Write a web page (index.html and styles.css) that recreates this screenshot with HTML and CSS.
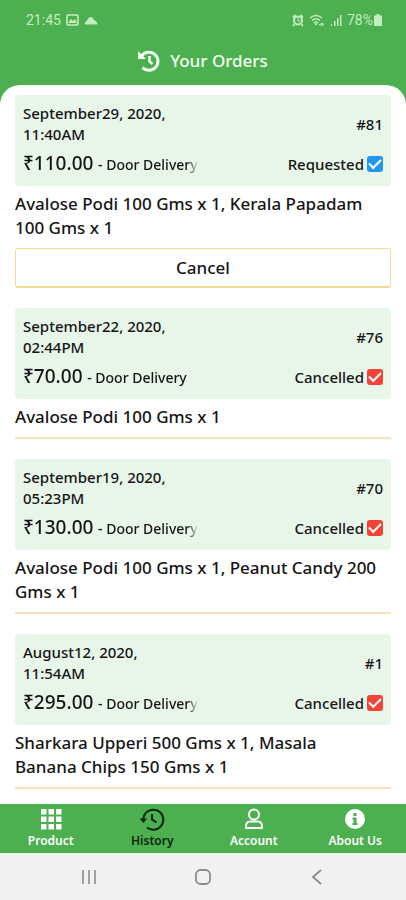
FILE: index.html
```html
<!DOCTYPE html>
<html lang="en">
<head>
  <meta charset="UTF-8">
  <meta name="viewport" content="width=device-width, initial-scale=1">
  <title>Your Orders</title>
  <link rel="stylesheet" href="styles.css">
</head>
<body>
  <div class="app">
    <header class="header">
      <div class="status-bar">
        <span class="clock">21:45</span>
        <svg class="status-icon image-icon" width="13" height="12" viewBox="0 0 13 12"><rect x="1" y="1" width="11" height="10" rx="1" fill="none" stroke="currentColor" stroke-width="1.6"/><path d="M2 9l3-4 2 2 2-2 2 4z" fill="currentColor"/></svg>
        <svg class="status-icon cloud-icon" width="14" height="9" viewBox="0 0 14 9"><path d="M1 8.500Q0 6 3 5Q4 1 7 1Q9 1 10 4Q13 5 13.500 8.500z" fill="currentColor"/></svg>
        <span class="spacer"></span>
        <svg class="status-icon" width="12" height="13" viewBox="0 0 12 13"><path d="M1 3.500L3.500 1M11 3.500L8.500 1M2.500 10.500L1 12M9.500 10.500L11 12" stroke="currentColor" stroke-width="1.800"/><circle cx="6" cy="6.500" r="4" fill="none" stroke="currentColor" stroke-width="2"/><path d="M6 4v3h2" fill="none" stroke="currentColor"/></svg>
        <svg class="status-icon wifi-icon" width="16" height="13" viewBox="0 0 16 13"><path d="M1 4Q7-1 13 4M3 6.500Q7 3 11 6.500M5 9Q7 7 9 9" fill="none" stroke="currentColor" stroke-width="1.500"/><path d="M7 11.500l-2-2h4z" fill="currentColor"/><path d="M10 11l4-2M12 12l3-2" stroke="currentColor" stroke-width="1.200"/></svg>
        <svg class="status-icon" width="12" height="12" viewBox="0 0 12 12"><path d="M1 10h1v2H1zM4 7h1.500v5H4zM7 4h1.500v8H7zM10 1h1.500v11H10z" fill="currentColor"/></svg>
        <span class="battery">78%</span>
        <svg class="status-icon battery-icon" width="8" height="12" viewBox="0 0 8 12"><path d="M2.500 0h3v1.500H8V12H0V1.500h2.500z" fill="currentColor"/></svg>
      </div>
      <div class="title-bar">
        <svg width="22" height="22" viewBox="0 0 22 22" fill="none" stroke="currentColor"><path d="M3.500 6.200A9 9 0 1 1 4.500 17.500" stroke-width="3"/><path d="M0 1v8h8z" fill="currentColor" stroke="none"/><path d="M11.500 6v5.500l3 2.500" stroke-width="2.600"/></svg>
        <h1>Your Orders</h1>
      </div>
    </header>

    <main class="orders">
      <section class="order">
        <div class="summary">
          <p class="date">September29, 2020, 11:40AM</p>
          <p class="number">#81</p>
          <p class="payment"><span class="price">₹110.00</span> - Door Delivery</p>
          <label class="state">Requested<input type="checkbox" class="tick requested" checked></label>
        </div>
        <p class="items">Avalose Podi 100 Gms x 1, Kerala Papadam 100 Gms x 1</p>
        <button type="button" class="cancel-btn">Cancel</button>
      </section>

      <section class="order closed">
        <div class="summary">
          <p class="date">September22, 2020, 02:44PM</p>
          <p class="number">#76</p>
          <p class="payment"><span class="price">₹70.00</span> - Door Delivery</p>
          <label class="state">Cancelled<input type="checkbox" class="tick cancelled" checked></label>
        </div>
        <p class="items">Avalose Podi 100 Gms x 1</p>
      </section>

      <section class="order closed">
        <div class="summary">
          <p class="date">September19, 2020, 05:23PM</p>
          <p class="number">#70</p>
          <p class="payment"><span class="price">₹130.00</span> - Door Delivery</p>
          <label class="state">Cancelled<input type="checkbox" class="tick cancelled" checked></label>
        </div>
        <p class="items">Avalose Podi 100 Gms x 1, Peanut Candy 200 Gms x 1</p>
      </section>

      <section class="order closed">
        <div class="summary">
          <p class="date">August12, 2020, 11:54AM</p>
          <p class="number">#1</p>
          <p class="payment"><span class="price">₹295.00</span> - Door Delivery</p>
          <label class="state">Cancelled<input type="checkbox" class="tick cancelled" checked></label>
        </div>
        <p class="items">Sharkara Upperi 500 Gms x 1, Masala Banana Chips 150 Gms x 1</p>
      </section>
    </main>

    <nav class="tabs">
      <a href="#product">
        <svg width="24" height="24" viewBox="0 0 24 24" fill="currentColor"><path d="M2 2h5.500v5.500H2zM9.500 2H15v5.500H9.500zM17 2h5.500v5.500H17zM2 9.500h5.500V15H2zM9.500 9.500H15V15H9.500zM17 9.500h5.500V15H17zM2 17h5.500v5.500H2zM9.500 17H15v5.500H9.500zM17 17h5.500v5.500H17z"/></svg>
        Product
      </a>
      <a href="#history" class="active">
        <svg width="24" height="24" viewBox="0 0 24 24" fill="none" stroke="currentColor"><path d="M3.300 12A10 10 0 1 1 7 20.500" stroke-width="2"/><path d="M-.5 11.500h7.500L3.500 16z" fill="currentColor" stroke="none"/><path d="M12 7v5.500l4.500 3" stroke-width="2"/></svg>
        History
      </a>
      <a href="#account">
        <svg width="24" height="24" viewBox="0 0 24 24" fill="none" stroke="currentColor" stroke-width="2"><circle cx="12" cy="7.500" r="5"/><path d="M8 14.500h8q4 0 4 5v1.500H4v-1.500q0-5 4-5z" stroke-linejoin="round"/></svg>
        Account
      </a>
      <a href="#about">
        <svg width="24" height="24" viewBox="0 0 24 24"><circle cx="12" cy="12" r="10" fill="currentColor"/><path d="M10.500 6h3v3h-3zM9.500 10.500h4v5.500h1v2h-5v-2h1v-3.500h-1z" fill="#4caf50"/></svg>
        About Us
      </a>
    </nav>

    <div class="system-nav">
      <button type="button" aria-label="Recent apps"><svg width="18" height="18" viewBox="0 0 18 18" stroke="currentColor" stroke-width="1.600"><path d="M3 2v14M9 2v14M15 2v14"/></svg></button>
      <button type="button" aria-label="Home"><svg width="18" height="18" viewBox="0 0 18 18" fill="none" stroke="currentColor" stroke-width="1.800"><rect x="2" y="2" width="14" height="14" rx="4.500"/></svg></button>
      <button type="button" aria-label="Back"><svg width="18" height="18" viewBox="0 0 18 18" fill="none" stroke="currentColor" stroke-width="1.800"><path d="M13 2L5 9l8 7"/></svg></button>
    </div>
  </div>
</body>
</html>
```
FILE: styles.css
```css
* {
  box-sizing: border-box;
}
body {
  margin: 0;
  background: #4caf50;
  color: #161616;
  font-family: "Noto Sans", sans-serif;
  font-weight: 500;
}
h1, p {
  margin: 0;
}
svg {
  display: block;
  flex: none;
  overflow: visible;
}
.app {
  display: flex;
  flex-direction: column;
  height: 100vh;
}
.header {
  color: #f4fff0;
}
.status-bar {
  display: flex;
  align-items: center;
  gap: 5px;
  height: 40px;
  padding: 0 24px 0 26px;
  color: #c5ecc0;
  font: 14px Roboto, sans-serif;
}
.spacer {
  flex: 1;
}
.battery-icon {
  margin-left: -4px;
}
.title-bar {
  display: flex;
  align-items: center;
  justify-content: center;
  gap: 10px;
  height: 45px;
  padding-bottom: 4px;
}
.title-bar h1 {
  font-size: 17px;
  font-weight: 500;
}
.orders {
  flex: 1;
  min-height: 0;
  overflow: hidden;
  padding: 10px 15px 0;
  background: #fff;
  border-radius: 20px 20px 0 0;
}
.order {
  margin-bottom: 20px;
}
.closed {
  border-bottom: 2px solid #f5e4b8;
  padding-bottom: 8px;
}
.summary {
  display: grid;
  grid-template-columns: minmax(0, 1fr) minmax(0, 1fr);
  grid-template-rows: 42px 28px;
  row-gap: 5px;
  align-items: center;
  padding: 8px;
  margin-bottom: 6px;
  background: #e8f5e9;
  border-radius: 4px;
}
.date {
  max-width: 156px;
  font-size: 15px;
  line-height: 21px;
}
.number {
  text-align: right;
  font-size: 15px;
}
.payment {
  max-width: 175px;
  overflow: hidden;
  white-space: nowrap;
  font-size: 14px;
  line-height: 28px;
  mask-image: linear-gradient(to left, transparent, #000 10px);
}
.price {
  margin-right: 1px;
  font-size: 19px;
}
.state {
  display: flex;
  align-items: center;
  justify-content: flex-end;
  gap: 3px;
  font-size: 15px;
}
.tick {
  appearance: none;
  display: grid;
  place-content: center;
  width: 16px;
  height: 16px;
  margin: 0;
  border-radius: 3px;
}
.tick::before {
  content: "";
  width: 10px;
  height: 5px;
  margin-bottom: 3px;
  border: solid #fff;
  border-width: 0 0 2px 2px;
  transform: rotate(-45deg);
}
.requested {
  background: #2196f3;
}
.cancelled {
  background: #f44336;
}
.items {
  padding-right: 12px;
  font-size: 17px;
  line-height: 24px;
}
.cancel-btn {
  display: block;
  width: 100%;
  height: 40px;
  margin-top: 8px;
  background: #fff;
  border: 1px solid #f2dc8f;
  border-bottom-width: 2px;
  border-radius: 3px;
  color: inherit;
  font: inherit;
  font-size: 17px;
}
.tabs {
  display: flex;
  background: #4caf50;
}
.tabs a {
  flex: 1;
  display: flex;
  flex-direction: column;
  align-items: center;
  gap: 2px;
  padding: 3px 0 4px;
  color: #fff;
  font-size: 12px;
  font-weight: 600;
  line-height: 16px;
  text-decoration: none;
}
.tabs .active {
  color: #10240f;
}
.system-nav {
  display: flex;
  justify-content: center;
  gap: 66px;
  background: #f1f1f1;
}
.system-nav button {
  display: grid;
  place-items: center;
  width: 48px;
  height: 47px;
  padding: 0;
  border: 0;
  background: none;
  color: #8c8c8c;
}
```
